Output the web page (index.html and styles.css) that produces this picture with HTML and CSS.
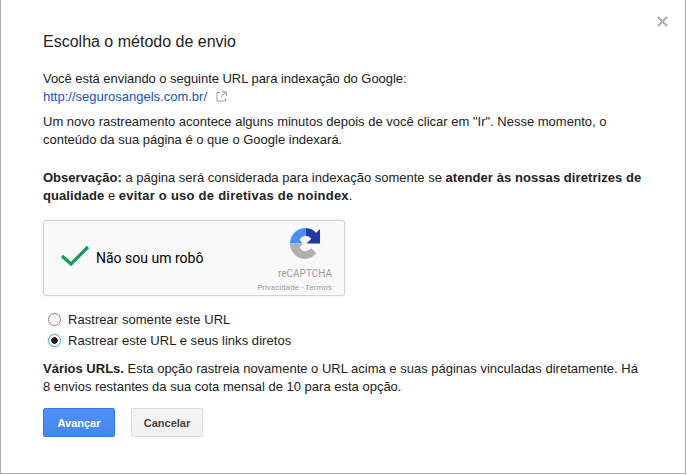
FILE: index.html
```html
<!DOCTYPE html>
<html>
<head>
  <meta charset="utf-8">
  <title>Escolha o método de envio</title>
  <link rel="stylesheet" href="styles.css">
</head>
<body>
  <div class="dialog">
    <span class="close-btn">
      <svg width="11" height="11" viewBox="0 0 11 11"><path d="M1 1l9 9M10 1l-9 9" stroke="#b0b0b0" stroke-width="2.4" fill="none"/></svg>
    </span>
    <h2>Escolha o método de envio</h2>

    <p class="intro">
      <span class="tight">Você está enviando o seguinte URL para indexação do Google:</span><br>
      <a href="#">http://segurosangels.com.br/</a>
      <svg class="ext-icon" width="11" height="11" viewBox="0 0 11 11"><path d="M4 1.500H1v8.500h8.500V7M6 .8h4.200V5M10 1L4.500 6.500" stroke="#999" stroke-width="1" fill="none"/></svg>
    </p>
    <p>Um novo rastreamento acontece alguns minutos depois de você clicar em "Ir". Nesse momento, o conteúdo da sua página é o que o Google indexará.</p>
    <p class="note"><b>Observação:</b> a página será considerada para indexação somente se <b class="wide">atender às nossas diretrizes de qualidade</b> e <b class="wider">evitar o uso de diretivas de noindex</b>.</p>

    <div class="captcha">
      <svg class="check" width="30" height="22" viewBox="0 0 30 22"><path d="M2 11l9 8L28 2" stroke="#0f9d58" stroke-width="3.200" fill="none"/></svg>
      <span class="captcha-label">Não sou um robô</span>
      <div class="captcha-brand">
        <svg width="31" height="31" viewBox="0 0 32 32">
          <path d="M16 0A16 16 0 0 1 27 5L31 1V16H17L22 11A8 8 0 0 0 16 8Z" fill="#1f3aa8"/>
          <path d="M16 0A16 16 0 0 0 0 16H13L10 12A8 8 0 0 1 16 8Z" fill="#4a90f5"/>
          <path d="M0 16.500H13L10 20A8 8 0 0 0 16 24A8 8 0 0 0 22 21L27 26A16 16 0 0 1 16 32A16 16 0 0 1 0 16.500Z" fill="#b0b0b0"/>
        </svg>
        <span class="captcha-name">reCAPTCHA</span>
        <span class="captcha-links">Privacidade - Termos</span>
      </div>
    </div>

    <div class="options">
      <label class="option"><input type="radio" name="crawl"> Rastrear somente este URL</label>
      <label class="option"><input type="radio" name="crawl" checked> Rastrear este URL e seus links diretos</label>
    </div>

    <p class="desc"><b>Vários URLs.</b> Esta opção rastreia novamente o URL acima e suas páginas vinculadas diretamente. Há 8 envios restantes da sua cota mensal de 10 para esta opção.</p>

    <div class="buttons">
      <button class="btn-primary">Avançar</button>
      <button class="btn">Cancelar</button>
    </div>
  </div>
</body>
</html>
```

FILE: styles.css
```css
html, body {
  margin: 0;
  padding: 0;
  background-color: #fff;
}
body {
  font-family: "Liberation Sans", Arial, sans-serif;
  font-size: 13px;
  color: #222;
}

/* Dialog box */
.dialog {
  position: relative;
  box-sizing: border-box;
  width: 686px;
  height: 474px;
  padding: 33px 42px 0;
  border: 1px solid #acacac;
  border-top: 0;
}
.close-btn {
  position: absolute;
  top: 16px;
  right: 17px;
  line-height: 0;
}
h2 {
  margin: 0 0 19px;
  font-size: 16px;
  font-weight: normal;
  line-height: 18px;
  color: #222;
}
p {
  margin: 0;
  line-height: 18px;
}
.intro {
  margin-bottom: 7px;
}
.tight {
  letter-spacing: -0.04px;
}
.note {
  margin-top: 20px;
}
.wide {
  letter-spacing: 0.07px;
}
.wider {
  letter-spacing: 0.25px;
}
a {
  color: #1155cc;
  text-decoration: none;
}
.ext-icon {
  margin-left: 5px;
  vertical-align: -1px;
}

/* Captcha box */
.captcha {
  display: flex;
  align-items: center;
  box-sizing: border-box;
  width: 302px;
  height: 76px;
  margin-top: 15px;
  padding: 0 12px 0 16px;
  background-color: #f9f9f9;
  border: 1px solid #d3d3d3;
  border-radius: 3px;
  box-shadow: 0 0 4px rgba(0,0,0,0.08);
}
.check {
  flex: none;
  margin-right: 6px;
  margin-top: -5px;
}
.captcha-label {
  flex: 1;
  font-family: Roboto, sans-serif;
  font-size: 14px;
  color: #000;
}
.captcha-brand {
  display: flex;
  flex-direction: column;
  align-items: flex-end;
  padding-top: 6px;
}
.captcha-brand svg {
  margin-right: 11px;
}
.captcha-name {
  margin-top: 9px;
  font-family: Roboto, sans-serif;
  font-size: 10px;
  line-height: 12px;
  color: #9b9b9b;
}
.captcha-links {
  margin-top: 2px;
  font-family: Roboto, sans-serif;
  font-size: 8px;
  line-height: 12px;
  color: #9b9b9b;
}

/* Radio options */
.options {
  display: flex;
  flex-direction: column;
  gap: 3px;
  margin-top: 15px;
  padding-left: 5px;
}
.option {
  display: flex;
  align-items: center;
  gap: 7px;
  line-height: 18px;
  letter-spacing: 0.05px;
}
.option input {
  appearance: none;
  box-sizing: border-box;
  width: 13px;
  height: 13px;
  margin: -2px 0 0;
  background: linear-gradient(#f0f0f0, #fff);
  border: 1px solid #8a8a8a;
  border-radius: 50%;
}
.option input:checked {
  background: radial-gradient(circle, #1a1a1a 3px, #fff 3.500px);
  border-color: #5a9fd8;
  box-shadow: 0 0 2px #8fc3ee;
}
.desc {
  margin-top: 10px;
}

/* Buttons */
.buttons {
  display: flex;
  gap: 16px;
  margin-top: 12px;
}
button {
  width: 72px;
  height: 29px;
  padding: 0;
  border-radius: 2px;
  font-family: inherit;
  font-size: 11px;
  font-weight: bold;
}
.btn-primary {
  color: #fff;
  background: linear-gradient(#4d90fe, #4787ed);
  border: 1px solid #3079ed;
}
.btn {
  color: #444;
  background: linear-gradient(#f5f5f5, #f1f1f1);
  border: 1px solid #dcdcdc;
}
```
